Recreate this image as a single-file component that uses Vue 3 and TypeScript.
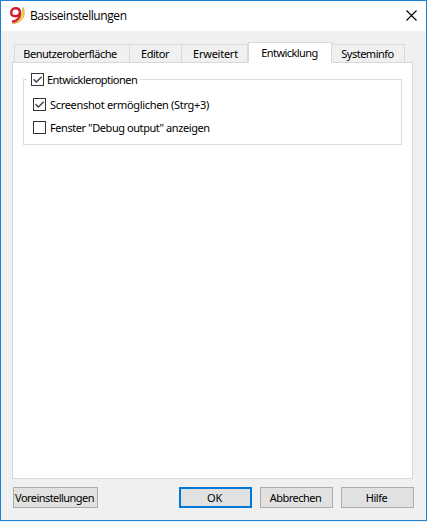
<script setup lang="ts">
import { ref } from 'vue'

interface Tab { id: string; label: string }
interface Option { id: string; label: string; checked: boolean }

const tabs: Tab[] = [
  { id: 'ui', label: 'Benutzeroberfläche' },
  { id: 'editor', label: 'Editor' },
  { id: 'advanced', label: 'Erweitert' },
  { id: 'dev', label: 'Entwicklung' },
  { id: 'system', label: 'Systeminfo' },
]
const active = ref('dev')
const developer = ref(true)
const options = ref<Option[]>([
  { id: 'shot', label: 'Screenshot ermöglichen (Strg+3)', checked: true },
  { id: 'debug', label: 'Fenster "Debug output" anzeigen', checked: false },
])
</script>

<template>
  <div class="window">
    <header class="titlebar">
      <svg class="logo" viewBox="0 0 16 17">
        <path d="M14.2 .6C17.6 8.5 13 16 3.6 16.6C8.6 15 12 11 14.2 .6Z" fill="#f3d45c" stroke="#d8a63a" stroke-width=".8" />
        <path d="M10.9 5C10.9 2.5 9.2 1.3 6.7 1.3S2.2 2.9 2.2 5.5S4 9.2 6.5 9.2S10.9 7.4 10.9 5C11.5 10.6 8.9 13.9 3 14.8" fill="none" stroke="#cf2030" stroke-width="2.4" />
      </svg>
      <h1 class="title">Basiseinstellungen</h1>
      <svg class="close" viewBox="0 0 11 11"><path d="M.5.5l10 10M10.5.5l-10 10" fill="none" stroke="#000" stroke-width="1.1" /></svg>
    </header>
    <main class="body">
      <nav class="tabs">
        <button v-for="t in tabs" :key="t.id" class="tab" :class="[t.id, { active: t.id === active }]" @click="active = t.id">
          <span>{{ t.label }}</span>
        </button>
      </nav>
      <section class="pane">
        <div class="group">
          <div class="legend check" @click="developer = !developer">
            <span class="box"><svg v-if="developer" viewBox="0 0 11 11"><path d="M1.5 5.3L4.3 8.1L9.7 2.7" /></svg></span>
            <span class="developer">Entwickleroptionen</span>
          </div>
          <div v-for="o in options" :key="o.id" class="check option" @click="o.checked = !o.checked">
            <span class="box"><svg v-if="o.checked" viewBox="0 0 11 11"><path d="M1.5 5.3L4.3 8.1L9.7 2.7" /></svg></span>
            <span :class="o.id">{{ o.label }}</span>
          </div>
        </div>
      </section>
      <footer class="actions">
        <button class="btn presets"><span>Voreinstellungen</span></button>
        <button class="btn ok"><span>OK</span></button>
        <button class="btn cancel"><span>Abbrechen</span></button>
        <button class="btn help"><span>Hilfe</span></button>
      </footer>
    </main>
  </div>
</template>

<style>
body { background: #efefef; overflow: hidden; }
</style>

<style scoped>
* { box-sizing: border-box; }
.window { width: 427px; height: 521px; border: 1px solid #1883d7; background: #f0f0f0; font: 11px/13px "Noto Sans", sans-serif; letter-spacing: -.5px; color: #000; white-space: nowrap; }
.titlebar { height: 30px; background: #fff; display: flex; align-items: center; padding: 0 9px 0 8px; }
.logo { width: 16px; height: 17px; margin-top: -2px; }
.title { font: 12px/16px "Open Sans", sans-serif; letter-spacing: -.42px; margin: 0 auto 0 5px; }
.close { width: 11px; height: 11px; margin-top: -2px; }
.body { padding: 11px 11px 0; }
button { font: inherit; letter-spacing: inherit; color: inherit; margin: 0; padding: 0; border: 0; border-radius: 0; text-align: center; flex: none; }
.tabs { display: flex; align-items: flex-end; height: 21px; padding-left: 2px; margin-bottom: -1px; position: relative; }
.tab { height: 19px; background: #f0f0f0; border: 1px solid #d9d9d9; border-left-width: 0; }
.tab.ui { width: 116px; border-left-width: 1px; letter-spacing: -.46px; padding-right: 4px; }
.tab.editor { width: 52px; padding-right: 1px; }
.tab.advanced { width: 66px; letter-spacing: -.25px; padding-left: 2px; }
.tab.system { width: 73px; padding-right: 1px; }
.tab.dev { width: 84px; letter-spacing: -.55px; padding-right: 1px; }
.tab.active { height: 21px; background: #fff; border-left-width: 1px; border-bottom: 0; padding-bottom: 2px; }
.pane { width: 401px; height: 417px; border: 1px solid #d9d9d9; background: #fff; padding: 16px 10px; }
.group { width: 379px; height: 66px; border: 1px solid #dcdcdc; }
.check { display: flex; align-items: center; gap: 4px; height: 13px; }
.legend { width: 113px; margin: -7px 0 0 3px; padding-left: 4px; background: #fff; gap: 3px; }
.developer { letter-spacing: -.52px; }
.shot { letter-spacing: -.32px; }
.debug { letter-spacing: -.43px; }
.option { margin: 12px 0 0 9px; }
.option + .option { margin-top: 10px; }
.box { width: 13px; height: 13px; flex: none; border: 1px solid #333; background: #fff; display: flex; }
.box svg { width: 11px; height: 11px; }
.box path { fill: none; stroke: #404040; stroke-width: 1.4; }
.actions { display: flex; padding: 8px 0 0 1px; }
.btn { width: 73px; height: 21px; background: #e1e1e1; border: 1px solid #adadad; margin-right: 8px; padding-right: 2px; }
.btn.presets { width: 85px; margin-right: 81px; letter-spacing: -.55px; }
.btn.ok { border: 2px solid #0078d7; letter-spacing: -.2px; }
</style>
